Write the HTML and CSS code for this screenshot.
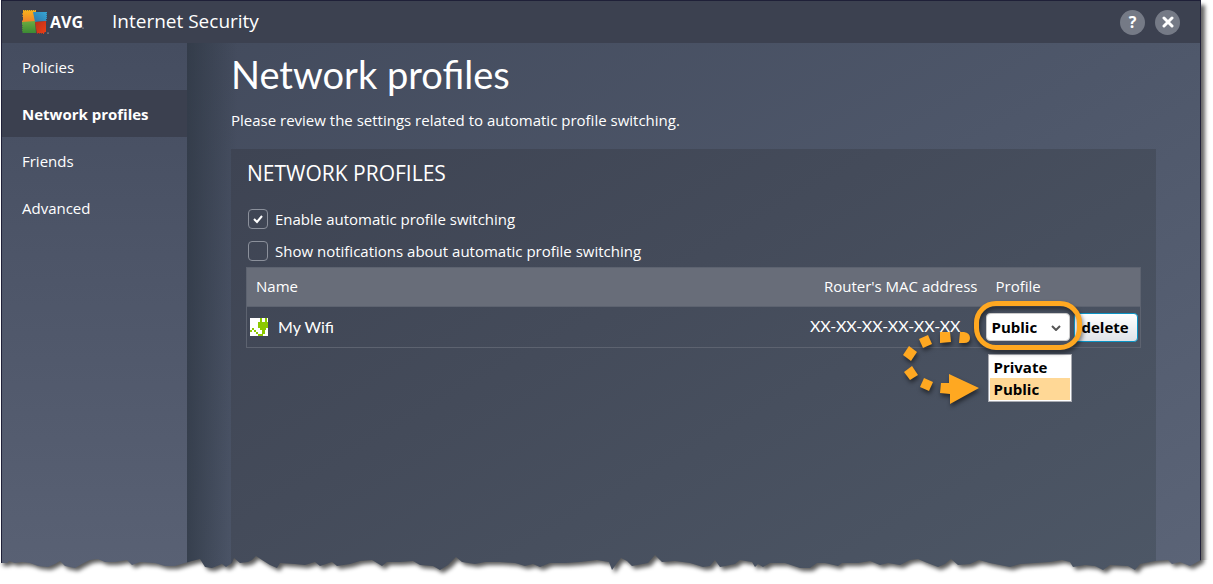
FILE: index.html
```html
<!DOCTYPE html>
<html lang="en">
<head>
<meta charset="utf-8">
<meta name="viewport" content="width=device-width, initial-scale=1">
<title>AVG Internet Security</title>
<link rel="stylesheet" href="styles.css">
</head>
<body>
<div class="window">
  <header class="titlebar">
    <svg class="logo" viewBox="0 0 66 28" role="img" aria-label="AVG">
      <defs>
        <linearGradient id="gy" x1="0" y1="0" x2="0" y2="1"><stop offset="0" stop-color="#f8b51b"/><stop offset="1" stop-color="#f07c2c"/></linearGradient>
        <linearGradient id="gg" x1="0" y1="0" x2="0" y2="1"><stop offset="0" stop-color="#6cab40"/><stop offset="1" stop-color="#3c8a34"/></linearGradient>
        <linearGradient id="gr" x1="0" y1="0" x2="1" y2="1"><stop offset="0" stop-color="#b9301c"/><stop offset="1" stop-color="#ee3f14"/></linearGradient>
        <linearGradient id="gb" x1="0" y1="1" x2="1" y2="0"><stop offset="0" stop-color="#2d75a8"/><stop offset="1" stop-color="#36a7d6"/></linearGradient>
      </defs>
      <path fill="url(#gy)" d="M1 3V2h1v1l1-1h1v1l1-1h1v1l1-1h1v1l1-1h1v1l1-1h1v1l1-1h1v2l-2 2 2 8-7 0-6 1H0l1-1H0v-1h1l-1-1h1V9L0 8h1V7L0 6h1L0 5h1z"/>
      <path fill="url(#gb)" d="M11 4h14v1l-1 1h1v1h-1l1 1v1h-1l1 1v1h-1v1l1 1-12 1z"/>
      <path fill="url(#gg)" d="M0 14l13-1 1 12H1l-1-1h1l-1-1v-1h1l-1-1v-1h1l-1-1v-1h1l-1-1z"/>
      <path fill="url(#gr)" d="M13 14l11-1v11h-1v1l-1-1v2h-1v-1h-1l-1 1v-1h-1l-1 1v-1h-1l-1 1z"/>
      <text class="logo-text" x="28" y="20">AVG</text>
      <circle cx="61" cy="20" r=".6" fill="#ddd"/><circle cx="26" cy="25" r=".6" fill="#ddd"/>
    </svg>
    <span class="product">Internet Security</span>
    <div class="window-actions">
      <button class="round" type="button" aria-label="Help">?</button>
      <button class="round" type="button" aria-label="Close">
        <svg viewBox="0 0 12 12" width="12" height="12"><path d="M2 2l8 8M10 2l-8 8" stroke="#fff" stroke-width="3" stroke-linecap="round"/></svg>
      </button>
    </div>
  </header>
  <div class="body">
    <nav class="sidebar">
      <a href="#">Policies</a>
      <a href="#" class="active" aria-current="page">Network profiles</a>
      <a href="#">Friends</a>
      <a href="#">Advanced</a>
    </nav>
    <main class="content">
      <h1>Network profiles</h1>
      <p class="intro">Please review the settings related to automatic profile switching.</p>
      <section class="panel">
        <h2>NETWORK PROFILES</h2>
        <label class="check"><input type="checkbox" checked><span>Enable automatic profile switching</span></label>
        <label class="check"><input type="checkbox"><span>Show notifications about automatic profile switching</span></label>
        <table class="profiles">
          <colgroup><col><col class="w-mac"><col class="w-choice"><col class="w-action"></colgroup>
          <thead>
            <tr><th>Name</th><th class="col-mac">Router's MAC address</th><th colspan="2">Profile</th></tr>
          </thead>
          <tbody>
            <tr>
              <td>
                <span class="network">
                  <svg viewBox="0 0 18 18" width="18" height="18" shape-rendering="crispEdges" aria-hidden="true"><path fill="#fff" d="M0 0h18v18H0z"/><path fill="#8cc800" d="M10 0h2v4h3V0h2v4h1v6h-2v2h-1v4h-2v2H8v-2h4v-4h-2v-2H8V4h2zM0 12h2v2H0zM2 10h2v2H2zM4 12h2v2H4zM6 14h2v2H6z"/></svg>
                  My Wifi
                </span>
              </td>
              <td class="mac">XX-XX-XX-XX-XX-XX</td>
              <td>
                <div class="picker">
                  <select aria-label="Profile"><option>Private</option><option selected>Public</option></select>
                  <svg class="chevron" viewBox="0 0 10 6" width="10" height="6" aria-hidden="true"><path d="M1 1l4 4 4-4" fill="none" stroke="#555" stroke-width="2"/></svg>
                  <ul class="menu"><li>Private</li><li class="current">Public</li></ul>
                  <span class="ring"></span>
                  <svg class="arrow" viewBox="890 325 100 90" width="100" height="90" aria-hidden="true">
                    <g fill="#ffa821">
                      <path d="M961 332l4 0q6 1 6 6t-6 5l-5 0z"/>
                      <path d="M941 332l10 0 1 10-11 1z"/>
                      <path d="M920 339l9-4 4 9-9 4z"/>
                      <path d="M910 346l8 6-6 9-8-6z"/>
                      <path d="M905 372l8-6 6 9-8 5z"/>
                      <path d="M925 378l9 4-4 9-9-4z"/>
                      <path d="M942 383l8 0v-9l30 14-29 16v-10l-10-1z"/>
                    </g>
                  </svg>
                </div>
              </td>
              <td><button class="delete" type="button">delete</button></td>
            </tr>
          </tbody>
        </table>
      </section>
    </main>
  </div>
</div>
<svg class="torn" viewBox="0 552 1213 32" preserveAspectRatio="none" aria-hidden="true">
  <defs>
    <path id="edge" d="M0 563H7L9 561 15 563 22 562 30 563 38 566 48 567 55 564 60 561 65 566 75 568 82 564 90 560 98 559 105 562 115 562 127 560 132 565 140 562 155 563 165 566 175 566 185 563 192 561 200 559 205 567 212 568 222 564 226 567 232 563 234 558 240 563 248 562 252 560 256 556 262 560 270 565 277 568 280 563 295 564 305 565 315 562 320 566 332 562 337 566 350 564 360 561 372 560 382 566 387 562 400 562 413 561 420 565 433 566 440 570 448 565 456 557 462 562 475 564 485 562 500 562 515 563 525 566 533 564 540 567 550 563 565 563 580 562 597 560 609 562 612 570 617 563 621 558 627 561 632 566 648 563 655 555 662 562 675 561 690 563 703 567 710 566 715 560 720 567 735 564 740 560 752 562 755 567 758 564 763 567 770 563 785 563 800 568 810 568 817 563 825 563 838 566 842 563 858 563 870 561 880 565 888 563 900 565 910 560 918 559 925 562 938 567 945 564 951 559 958 565 970 564 979 560 990 563 1010 567 1020 564 1035 563 1050 562 1062 560 1070 562 1073 567 1085 565 1095 566 1103 570 1110 565 1128 566 1135 570 1140 564 1155 561 1168 560 1172 564 1180 562 1190 566 1201 560V530H0z"/>
    <mask id="below"><path fill="#fff" d="M0 560H1213V584H0z"/><path fill="#fff" d="M0 552H1201V584H0z"/><use href="#edge" fill="#000"/></mask>
    <filter id="soft" x="-5%" y="-50%" width="110%" height="200%"><feGaussianBlur stdDeviation="2"/></filter>
  </defs>
  <g mask="url(#below)">
    <path fill="#fff" d="M0 552H1213V584H0z"/>
    <use href="#edge" x="3" y="3" fill="#000" fill-opacity=".65" filter="url(#soft)"/>
  </g>
</svg>
</body>
</html>
```
FILE: styles.css
```css
* { box-sizing: border-box; }

body {
  position: relative;
  display: flex;
  min-height: 100vh;
  margin: 0;
  padding: 0 12px 12px 1px;
  background: #fff;
  color: #fff;
  font: 15px/20px "Open Sans", "Noto Sans", sans-serif;
}

.window {
  display: flex;
  flex: 1;
  flex-direction: column;
  border: 1px solid #1f2038;
  box-shadow: 4px 5px 4px rgba(0, 0, 0, .6);
}

.titlebar {
  display: flex;
  align-items: center;
  height: 42px;
  padding: 0 20px;
  background: #3c4150;
}

.logo { width: 66px; height: 28px; }
.logo-text { fill: #fff; font: 700 16px "Open Sans", sans-serif; }
.product { margin-left: 24px; padding-bottom: 2px; font-size: 19px; line-height: 28px; }
.window-actions { display: flex; gap: 10px; margin-left: auto; }

.round {
  display: grid;
  place-items: center;
  width: 25px;
  height: 25px;
  padding: 0;
  border: 0;
  border-radius: 50%;
  background: #757a86;
  color: #fff;
  font: 700 16px/20px "Open Sans", sans-serif;
}

.body { display: flex; flex: 1; }

.sidebar {
  width: 185px;
  background: linear-gradient(#454d60, #596174);
}
.sidebar a {
  display: block;
  height: 47px;
  padding: 0 20px;
  color: #fff;
  line-height: 48px;
  text-decoration: none;
}
.sidebar .active { background: #3b404f; font-weight: 700; }

.content {
  display: flex;
  flex: 1;
  flex-direction: column;
  padding: 7px 44px 0;
  background:
    linear-gradient(90deg, rgba(45, 54, 66, .7), rgba(45, 54, 66, 0) 50px),
    linear-gradient(150deg, #434b5d, #4e576a 50%, #5b6477);
}

h1 { margin: 0; font: 400 38px/48px Lato, sans-serif; }
.intro { margin: 12px 0 19px; }

.panel {
  flex: 1;
  padding: 11px 15px;
  background: linear-gradient(150deg, #3e4453, #444b5a 40%, #4d5766);
}
h2 { margin: 0 0 17px; padding-left: 1px; font-size: 21px; font-weight: 400; line-height: 26px; }

.check { display: flex; align-items: center; gap: 7px; height: 32px; padding-left: 2px; }
.check input {
  appearance: none;
  width: 20px;
  height: 20px;
  margin: 0;
  border: 1px solid #8b909b;
  border-radius: 4px;
}
.check input:checked {
  background: url("data:image/svg+xml,%3Csvg xmlns='http://www.w3.org/2000/svg' viewBox='0 0 18 18'%3E%3Cpath d='M5 9l3 3 5-6' fill='none' stroke='white' stroke-width='2'/%3E%3C/svg%3E") center / 18px;
}

.profiles {
  width: 100%;
  border: 1px solid #5d6370;
  border-collapse: collapse;
  table-layout: fixed;
}
.w-mac { width: 180px; }
.w-choice { width: 88px; }
.w-action { width: 66px; }
.profiles th {
  height: 39px;
  padding: 0 9px 2px;
  background: #686d79;
  border-bottom: 1px solid #5d6370;
  font-weight: 400;
  text-align: left;
}
.profiles td { height: 41px; padding: 0; }
.profiles .col-mac, .profiles .mac { text-align: right; }
.profiles .mac { padding: 0 26px 2px 0; font-family: Lato, sans-serif; font-size: 16px; }

.network { display: flex; align-items: center; gap: 10px; padding-left: 3px; font-family: Lato, sans-serif; font-size: 16px; }

.picker { position: relative; width: 84px; height: 28px; }
.picker select {
  appearance: none;
  width: 84px;
  height: 28px;
  padding: 0 4px;
  border: 1px solid #ccc;
  border-radius: 4px;
  background: #fff;
  color: #000;
  font: 700 15px/20px "Open Sans", sans-serif;
}
.chevron { position: absolute; top: 12px; right: 9px; }

.menu {
  position: absolute;
  top: 41px;
  left: 2px;
  width: 84px;
  margin: 0;
  padding: 1px;
  border: 1px solid #a9abb2;
  background: #fff;
  color: #000;
  font-weight: 700;
  line-height: 22px;
  list-style: none;
}
.menu li { height: 22px; padding-left: 3px; }
.menu .current { background: #ffd896; }

.ring {
  position: absolute;
  inset: -12px -12px -9px -12px;
  border: 5px solid #ffa821;
  border-radius: 22px;
  filter: drop-shadow(1px 3px 2px rgba(0, 0, 0, .5));
  pointer-events: none;
}
.arrow {
  position: absolute;
  top: 12px;
  left: -97px;
  filter: drop-shadow(1px 3px 2px rgba(0, 0, 0, .5));
  pointer-events: none;
}

.delete {
  display: block;
  width: 64px;
  height: 29px;
  padding: 0 0 0 6px;
  border: 1px solid #0a93c4;
  border-radius: 4px;
  background: linear-gradient(#fff, #dfe3e8);
  color: #000;
  font: 700 15px/20px "Open Sans", sans-serif;
  text-align: left;
}

.torn {
  position: absolute;
  bottom: 0;
  left: 0;
  width: 100%;
  height: 32px;
}
```
